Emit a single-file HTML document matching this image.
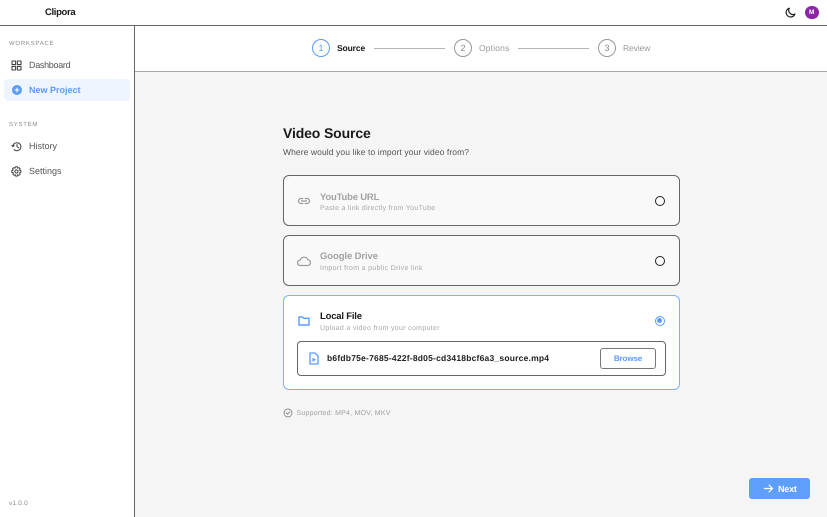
<!DOCTYPE html>
<html><head><meta charset="utf-8">
<style>
*{box-sizing:border-box;margin:0;padding:0}
html,body{width:827px;height:517px;overflow:hidden;background:#f5f5f5;font-family:"Liberation Sans",sans-serif;color:#1a1a1a;text-rendering:geometricPrecision}
.a{position:absolute}
.t{position:absolute;white-space:nowrap;line-height:1}
svg{position:absolute;fill:none;stroke-linecap:round;stroke-linejoin:round}
.card{position:absolute;left:283px;width:397px;border-radius:6px;background:#f9f9f9;border:1px solid #666}
.circ{position:absolute;width:18px;height:18px;border-radius:50%;font-size:9px;line-height:16.5px;text-align:center;background:#fff}
.radio{position:absolute;left:655px;width:10px;height:10px;border-radius:50%;border:1.6px solid #222}
</style></head><body>
<div class="a" style="left:0;top:0;width:827px;height:26px;background:#fff;border-bottom:1px solid #666"></div>
<div class="t" style="left:45px;top:8px;font-size:9.5px;font-weight:bold;letter-spacing:-.35px">Clipora</div>
<svg style="left:785px;top:7px" width="11" height="11" viewBox="0 0 11 11" stroke="#222" stroke-width="1.2"><path d="M4.3 1.2A4.5 4.5 0 1 0 9.9 7 4.2 4.2 0 0 1 4.3 1.2Z"/></svg>
<div class="a" style="left:805px;top:5.5px;width:13.5px;height:13.5px;border-radius:50%;background:#8e24aa;color:#fff;font-size:6.5px;line-height:13.5px;text-align:center;font-weight:bold">M</div>

<div class="a" style="left:0;top:26px;width:135px;height:491px;background:#fff;border-right:1px solid #666"></div>
<div class="t" style="left:9px;top:41px;font-size:6px;letter-spacing:.75px;color:#8a8a8a">WORKSPACE</div>
<svg style="left:11px;top:60px" width="11" height="11" viewBox="0 0 11 11" stroke="#444" stroke-width="1.1"><rect x="1" y="1" width="3.6" height="3.6"/><rect x="6.4" y="1" width="3.6" height="3.6"/><rect x="1" y="6.4" width="3.6" height="3.6"/><rect x="6.4" y="6.4" width="3.6" height="3.6"/></svg>
<div class="t" style="left:29px;top:60.5px;font-size:9px;letter-spacing:-.3px;color:#555">Dashboard</div>
<div class="a" style="left:4px;top:79px;width:126px;height:22px;border-radius:4px;background:#eef5ff"></div>
<div class="a" style="left:11.5px;top:85px;width:10px;height:10px;border-radius:50%;background:#5b9bf8"></div>
<svg style="left:11.5px;top:85px" width="10" height="10" viewBox="0 0 10 10" stroke="#fff" stroke-width="1"><path d="M5 3v4M3 5h4"/></svg>
<div class="t" style="left:29px;top:85.5px;font-size:9px;font-weight:bold;color:#5b9bf8">New Project</div>
<div class="t" style="left:9px;top:122px;font-size:6px;letter-spacing:.75px;color:#8a8a8a">SYSTEM</div>
<svg style="left:11px;top:141px" width="11" height="11" viewBox="0 0 11 11" stroke="#444" stroke-width="1"><path d="M1.9 5.5a4 4 0 1 1 1.2 3.1M.8 4.4l1.1 1.2 1.2-1.1M6 3.2v2.500l1.700 1"/></svg>
<div class="t" style="left:29px;top:142px;font-size:9px;color:#555">History</div>
<svg style="left:11px;top:166px" width="11" height="11" viewBox="0 0 11 11" stroke="#444" stroke-width="1"><circle cx="5.5" cy="5.5" r="1.6"/><path d="M4.6.8h1.8l.3 1.4 1.3-.6 1.2 1.3-.7 1.2 1.4.5v1.800l-1.400.4.7 1.300-1.200 1.200-1.300-.6-.3 1.400H4.600l-.3-1.400-1.300.6-1.200-1.200.7-1.300L.8 6.400V4.600l1.400-.5-.7-1.200L2.700 1.600l1.300.6z"/></svg>
<div class="t" style="left:29px;top:167px;font-size:9px;color:#555">Settings</div>
<div class="t" style="left:9px;top:500.5px;font-size:6.5px;letter-spacing:.2px;color:#8a8a8a">v1.0.0</div>

<div class="a" style="left:135px;top:26px;width:692px;height:46px;background:#fff;border-bottom:1px solid #aaa"></div>
<div class="circ" style="left:312px;top:39px;border:1.3px solid #5b9bf8;color:#5b9bf8">1</div>
<div class="t" style="left:337px;top:44px;font-size:8.5px;font-weight:bold;letter-spacing:-.13px">Source</div>
<div class="a" style="left:374px;top:48px;width:71px;height:1px;background:#b5b5b5"></div>
<div class="circ" style="left:454px;top:39px;border:1.3px solid #999;color:#888">2</div>
<div class="t" style="left:479px;top:44px;font-size:8.5px;letter-spacing:.17px;color:#999">Options</div>
<div class="a" style="left:518px;top:48px;width:71px;height:1px;background:#b5b5b5"></div>
<div class="circ" style="left:598px;top:39px;border:1.3px solid #999;color:#888">3</div>
<div class="t" style="left:623px;top:44px;font-size:8.5px;letter-spacing:-.1px;color:#999">Review</div>

<div class="t" style="left:283px;top:125.5px;font-size:14px;font-weight:bold;letter-spacing:-.13px">Video Source</div>
<div class="t" style="left:283px;top:148px;font-size:8.5px;letter-spacing:.09px;color:#555">Where would you like to import your video from?</div>

<div class="card" style="top:175px;height:51px"></div>
<svg style="left:297px;top:194px" width="14" height="14" viewBox="0 0 14 14" stroke="#999" stroke-width="1.2"><path d="M5.8 4.500H4a2.500 2.500 0 0 0 0 5h1.800M8.200 4.500H10a2.500 2.500 0 0 1 0 5H8.200M4.500 7h5"/></svg>
<div class="t" style="left:320px;top:192.800px;font-size:9.500px;font-weight:bold;letter-spacing:-.2px;color:#a3a3a3">YouTube URL</div>
<div class="t" style="left:320px;top:205px;font-size:7px;letter-spacing:.29px;color:#a8a8a8">Paste a link directly from YouTube</div>
<div class="radio" style="top:196px"></div>

<div class="card" style="top:235px;height:51px"></div>
<svg style="left:297px;top:254px" width="14" height="14" viewBox="0 0 14 14" stroke="#999" stroke-width="1.2"><path d="M3.300 11.500a2.700 2.700 0 0 1-.2-5.400 4.200 4.200 0 0 1 7.900-.3 2.900 2.900 0 0 1 0 5.700z"/></svg>
<div class="t" style="left:320px;top:252.300px;font-size:9.500px;font-weight:bold;letter-spacing:-.1px;color:#a3a3a3">Google Drive</div>
<div class="t" style="left:320px;top:264.500px;font-size:7px;letter-spacing:.33px;color:#a8a8a8">Import from a public Drive link</div>
<div class="radio" style="top:255.500px"></div>

<div class="card" style="top:295px;height:95px;background:#fff;border:1px solid #7fb0f8"></div>
<svg style="left:297px;top:314px" width="14" height="14" viewBox="0 0 14 14" stroke="#5b9bf8" stroke-width="1.4"><path d="M2 3h3.500l1.200 1.300H12v6.700H2z"/></svg>
<div class="t" style="left:320px;top:312.300px;font-size:9.500px;font-weight:bold;letter-spacing:-.2px">Local File</div>
<div class="t" style="left:320px;top:324.500px;font-size:7px;letter-spacing:.32px;color:#a8a8a8">Upload a video from your computer</div>
<div class="a" style="left:654.800px;top:315.800px;width:10px;height:10px;border-radius:50%;border:1.2px solid #5b9bf8"></div>
<div class="a" style="left:657.300px;top:318.300px;width:5px;height:5px;border-radius:50%;background:#5b9bf8"></div>

<div class="a" style="left:297px;top:341px;width:369px;height:35px;border:1px solid #666;border-radius:4px;background:#fff"></div>
<svg style="left:308px;top:352px" width="12" height="13" viewBox="0 0 12 13" stroke="#5b9bf8" stroke-width="1.3"><path d="M2 1h5l3 3v8H2z"/><path d="M4.500 5.800v4L8 7.800z" fill="#5b9bf8" stroke="none"/></svg>
<div class="t" style="left:327px;top:354px;font-size:8.500px;font-weight:bold;letter-spacing:.215px;color:#222">b6fdb75e-7685-422f-8d05-cd3418bcf6a3_source.mp4</div>
<div class="a" style="left:600px;top:348px;width:56px;height:21px;border:1px solid #777;border-radius:3px;background:#fff;color:#5b9bf8;font-size:8px;font-weight:bold;letter-spacing:-.1px;line-height:19px;text-align:center">Browse</div>

<svg style="left:283px;top:408px" width="10" height="10" viewBox="0 0 10 10" stroke="#888" stroke-width=".9"><circle cx="5" cy="5" r="4"/><path d="M3.200 5l1.300 1.300 2.300-2.500"/></svg>
<div class="t" style="left:296.500px;top:409.500px;font-size:7px;letter-spacing:.22px;color:#a0a0a0">Supported: MP4, MOV, MKV</div>

<div class="a" style="left:749px;top:478px;width:61px;height:21px;border-radius:3px;background:#5f9ffb"></div>
<svg style="left:763px;top:483px" width="11" height="11" viewBox="0 0 11 11" stroke="#fff" stroke-width="1.2"><path d="M1.500 5.500h8M6 2l3.500 3.500L6 9"/></svg>
<div class="t" style="left:778px;top:484.500px;font-size:9px;font-weight:bold;letter-spacing:-.2px;color:#fff">Next</div>
</body></html>
